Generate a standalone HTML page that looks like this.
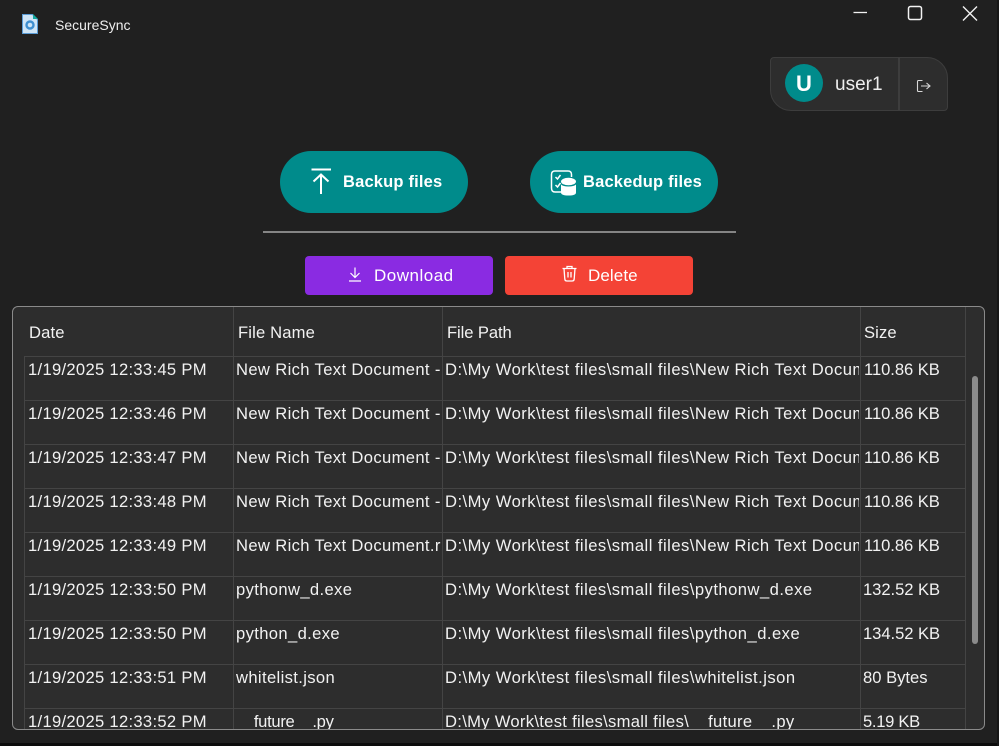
<!DOCTYPE html>
<html><head><meta charset="utf-8"><style>
html,body{margin:0;padding:0;background:#202020}
body{width:999px;height:746px;position:relative;overflow:hidden;font-family:"Liberation Sans",sans-serif;color:#f2f2f2}
.a{position:absolute;white-space:nowrap}
.panel{left:12px;top:306px;width:971px;height:422px;background:#2d2d2d;border:1px solid #8a8a8a;border-radius:6px;overflow:hidden}
.hl{position:absolute;left:11px;width:941px;height:1px;background:#444}
.vl{position:absolute;top:0;width:1px;height:422px;background:#444}
.t{position:absolute;white-space:nowrap;overflow:hidden;font-size:16.6px;line-height:22px;height:24px;letter-spacing:.1px}
.d{left:15px;letter-spacing:.3px}
.n{left:223px;width:205px;letter-spacing:.36px}
.p{left:432px;width:414px;letter-spacing:.47px}
.s{left:851px;letter-spacing:-.05px}
.btn{background:#008b8b;border-radius:31px;width:188px;height:62px;top:151px;color:#fff;font-weight:700;font-size:16.5px;line-height:62px;letter-spacing:.18px}
.b2{top:256px;height:39px;width:188px;border-radius:4px;color:#fff;font-size:17px;line-height:39px}
</style></head><body>
<svg class="a" style="left:20px;top:13px" width="20" height="22" viewBox="0 0 20 22"><path d="M2.500 1.500H12.500L17.500 6.500V20.500H2.500Z" fill="#cfe5f7" stroke="#5a9bd4"/><path d="M13 1L18 6H13Z" fill="#12a8a0"/><circle cx="10" cy="12" r="3.500" fill="none" stroke="#3f8fd0" stroke-width="2.400"/></svg>
<div class="a" style="left:55px;top:16px;font-size:14px;line-height:18px;color:#eee">SecureSync</div>
<svg class="a" style="left:850px;top:4px" width="140" height="20" viewBox="0 0 140 20" fill="none" stroke="#f2f2f2" stroke-width="1.300"><path d="M3.500 8.500H17"/><rect x="58.500" y="2.500" width="13" height="13" rx="2" stroke-width="1.500"/><path d="M113 2.500L127 16.500M127 2.500L113 16.500" stroke-width="1.400"/></svg>
<div class="a" style="left:770px;top:57px;width:178px;height:54px;box-sizing:border-box;background:#2d2d2d;border:1px solid #3d3d3d;border-radius:4px 21px 4px 21px"></div>
<div class="a" style="left:898px;top:58px;width:1.500px;height:52px;background:#3d3d3d"></div>
<div class="a" style="left:785px;top:64px;width:38px;height:38px;border-radius:50%;background:#008b8b;color:#fff;font-weight:700;font-size:22px;line-height:40px;text-align:center">U</div>
<div class="a" style="left:835px;top:73px;font-size:19px;line-height:24px;color:#eee">user1</div>
<svg class="a" style="left:915px;top:78px" width="18" height="16" viewBox="0 0 18 16" fill="none" stroke="#d8d8d8" stroke-width="1.100"><path d="M7.500 2.500H3.500Q2.500 2.500 2.500 3.500V12.500Q2.500 13.500 3.500 13.500H7.500"/><path d="M6 8H14.500M11.500 5L15 8L11.500 11"/></svg>
<div class="a btn" style="left:280px"></div>
<svg class="a" style="left:308px;top:166px" width="26" height="30" viewBox="0 0 26 30" fill="none" stroke="#fff" stroke-width="2"><path d="M3.500 3.500H23"/><path d="M13 28V9M5.500 15.500L13 8.500L20.500 15.500"/></svg>
<div class="a btn" style="left:343px;width:auto;background:none">Backup files</div>
<div class="a btn" style="left:530px"></div>
<svg class="a" style="left:548px;top:168px" width="30" height="29" viewBox="0 0 30 29" fill="none" stroke="#fff" stroke-width="1.500"><path d="M13 24H7Q3.500 24 3.500 20V6.500Q3.500 3 7 3H20Q23.500 3 23.500 6.500V9"/><path d="M7.500 9L9.500 11L12.500 7M7.500 17L9.500 19L12.500 15"/><ellipse cx="20.500" cy="13.500" rx="7.500" ry="3.800" fill="#fff" stroke="none"/><path d="M13 16.500V24.500Q13 27.500 20.500 27.500Q28 27.500 28 24.500V16.500Q26 18.500 20.500 18.500Q15 18.500 13 16.500Z" fill="#fff" stroke="none"/></svg>
<div class="a btn" style="left:583px;width:auto;background:none">Backedup files</div>
<div class="a" style="left:263px;top:231px;width:473px;height:2px;background:#858585"></div>
<div class="a b2" style="left:305px;background:#8a2be2"></div>
<svg class="a" style="left:347px;top:266px" width="16" height="17" viewBox="0 0 16 17" fill="none" stroke="#fff" stroke-width="1.200"><path d="M8 1.500V11M3.500 7L8 11.500L12.500 7M2 15H14"/></svg>
<div class="a b2" style="left:374px;width:auto;background:none;letter-spacing:.5px">Download</div>
<div class="a b2" style="left:505px;background:#f44336"></div>
<svg class="a" style="left:561px;top:265px" width="17" height="18" viewBox="0 0 17 18" fill="none" stroke="#fff" stroke-width="1.300"><path d="M1.500 3.500H15.500M6 3.500V1.500H11V3.500M3 3.500L3.800 14Q4 16 6 16H11Q13 16 13.200 14L14 3.500M7 7V12.500M10 7V12.500"/></svg>
<div class="a b2" style="left:588px;width:auto;background:none;letter-spacing:.1px">Delete</div>
<div class="a panel">
<div class="vl" style="left:220px"></div><div class="vl" style="left:429px"></div><div class="vl" style="left:847px"></div><div class="vl" style="left:952px"></div>
<div class="vl" style="left:11px;top:49px"></div>
<div class="hl" style="top:49px"></div><div class="hl" style="top:93px"></div><div class="hl" style="top:137px"></div><div class="hl" style="top:181px"></div><div class="hl" style="top:225px"></div><div class="hl" style="top:269px"></div><div class="hl" style="top:313px"></div><div class="hl" style="top:357px"></div><div class="hl" style="top:401px"></div>
<div class="a" style="left:959px;top:69px;width:6px;height:268px;background:#8b8b8b;border-radius:3px"></div>
<div class="t" style="left:16px;top:15px;letter-spacing:.15px">Date</div><div class="t" style="left:225px;top:15px;letter-spacing:.15px">File Name</div><div class="t" style="left:434px;top:15px;letter-spacing:-.1px">File Path</div><div class="t" style="left:851px;top:15px">Size</div>

<div class="t d" style="top:52px">1/19/2025 12:33:45 PM</div><div class="t n" style="top:52px">New Rich Text Document - Copy (4).rtf</div><div class="t p" style="top:52px">D:\My Work\test files\small files\New Rich Text Document - Copy (4).rtf</div><div class="t s" style="top:52px">110.86 KB</div>
<div class="t d" style="top:96px">1/19/2025 12:33:46 PM</div><div class="t n" style="top:96px">New Rich Text Document - Copy (3).rtf</div><div class="t p" style="top:96px">D:\My Work\test files\small files\New Rich Text Document - Copy (3).rtf</div><div class="t s" style="top:96px">110.86 KB</div>
<div class="t d" style="top:140px">1/19/2025 12:33:47 PM</div><div class="t n" style="top:140px">New Rich Text Document - Copy (2).rtf</div><div class="t p" style="top:140px">D:\My Work\test files\small files\New Rich Text Document - Copy (2).rtf</div><div class="t s" style="top:140px">110.86 KB</div>
<div class="t d" style="top:184px">1/19/2025 12:33:48 PM</div><div class="t n" style="top:184px">New Rich Text Document - Copy.rtf</div><div class="t p" style="top:184px">D:\My Work\test files\small files\New Rich Text Document - Copy.rtf</div><div class="t s" style="top:184px">110.86 KB</div>
<div class="t d" style="top:228px">1/19/2025 12:33:49 PM</div><div class="t n" style="top:228px">New Rich Text Document.rtf</div><div class="t p" style="top:228px">D:\My Work\test files\small files\New Rich Text Document.rtf</div><div class="t s" style="top:228px">110.86 KB</div>
<div class="t d" style="top:272px">1/19/2025 12:33:50 PM</div><div class="t n" style="top:272px">pythonw_d.exe</div><div class="t p" style="top:272px">D:\My Work\test files\small files\pythonw_d.exe</div><div class="t s" style="top:272px;left:850px">132.52 KB</div>
<div class="t d" style="top:316px">1/19/2025 12:33:50 PM</div><div class="t n" style="top:316px">python_d.exe</div><div class="t p" style="top:316px">D:\My Work\test files\small files\python_d.exe</div><div class="t s" style="top:316px;left:850px">134.52 KB</div>
<div class="t d" style="top:360px">1/19/2025 12:33:51 PM</div><div class="t n" style="top:360px">whitelist.json</div><div class="t p" style="top:360px">D:\My Work\test files\small files\whitelist.json</div><div class="t s" style="top:360px;left:850px;letter-spacing:0">80 Bytes</div>
<div class="t d" style="top:404px">1/19/2025 12:33:52 PM</div><div class="t n" style="top:404px;letter-spacing:-.3px">__future__.py</div><div class="t p" style="top:404px;letter-spacing:.3px">D:\My Work\test files\small files\__future__.py</div><div class="t s" style="top:404px;left:850px;letter-spacing:-.3px">5.19 KB</div>
</div>
<div class="a" style="left:0;top:743px;width:999px;height:3px;background:#0c0c0c"></div>
<div class="a" style="left:997px;top:0;width:2px;height:746px;background:#161616"></div>
</body></html>
